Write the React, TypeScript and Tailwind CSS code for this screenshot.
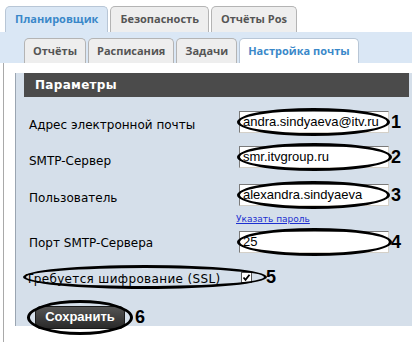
const tabFont = "font-['Open_Sans',sans-serif]";

function TopTab({ label, active }: { label: string; active?: boolean }) {
  return (
    <div
      className={
        "h-[26px] px-[9px] flex items-center rounded-t-[5px] border border-b-0 text-[11px] font-bold " +
        (active
          ? "bg-[#dae7f5] border-[#b8c6d6] text-[#3a88c9]"
          : "bg-[#eeeeee] border-[#b4b4b4] text-[#555555]")
      }
    >
      {label}
    </div>
  );
}

function SubTab({ label, active }: { label: string; active?: boolean }) {
  return (
    <div
      className={
        "h-[25px] px-[8px] flex items-center rounded-t-[5px] border border-b-0 text-[11px] font-bold " +
        (active
          ? "bg-white border-[#b8c6d6] text-[#3a88c9]"
          : "bg-[#eeeeee] border-[#b4b4b4] text-[#555555]")
      }
    >
      {label}
    </div>
  );
}

function Field({ value, wide }: { value: string; wide?: boolean }) {
  return (
    <div className="relative w-[150px] h-[22px]">
      <div className="w-full h-full bg-white border border-t-[#7a7a7a] border-l-[#7a7a7a] border-b-[#d4d0c8] border-r-[#d4d0c8] flex items-center pl-[3px] overflow-hidden whitespace-nowrap font-['Liberation_Sans',Arial,sans-serif] text-[13px] text-black">
        {value}
      </div>
      <div
        className={
          "absolute -top-[3px] -bottom-[3px] -left-[2px] rounded-[50%] border-[3px] border-black " +
          (wide ? "-right-[3px]" : "-right-[1px]")
        }
      />
    </div>
  );
}

function Num({ n }: { n: string }) {
  return (
    <span className="ml-[2px] font-['Liberation_Sans',Arial,sans-serif] font-bold text-[18px] leading-none text-black">
      {n}
    </span>
  );
}

export default function App() {
  return (
    <div className="w-[412px] h-[342px] bg-white overflow-hidden font-['DejaVu_Sans',sans-serif]">
      {/* top tabs */}
      <div className={"flex items-end gap-[2px] pl-[5px] pt-[6px] " + tabFont}>
        <TopTab label="Планировщик" active />
        <TopTab label="Безопасность" />
        <TopTab label="Отчёты Pos" />
      </div>
      <div className={"h-[31px] bg-[#dae7f5] flex items-end gap-[2px] pl-[24px] " + tabFont}>
        <SubTab label="Отчёты" />
        <SubTab label="Расписания" />
        <SubTab label="Задачи" />
        <SubTab label="Настройка почты" active />
      </div>

      {/* content */}
      <div className="ml-[3px] border-l border-[#a9a9a9] pl-[11px] pt-[20px] h-[279px]">
        <div className="border-l border-[#9aa5b1] bg-[#d5dfea] h-[253px] pr-[3px]">
          <div className="-mt-[10px] ml-[8px] h-[24px] bg-[#4b4b4b] flex items-center pl-[11px] text-white font-bold text-[12px] tracking-[0.3px]">
            Параметры
          </div>

          <div className="pl-[13px] pt-[13px] text-[12px] text-black">
            <div className="flex items-center h-[24px]">
              <span className="w-[210px] pt-[6px]">Адрес электронной почты</span>
              <Field value="andra.sindyaeva@itv.ru" />
              <Num n="1" />
            </div>
            <div className="flex items-center h-[24px] mt-[11px]">
              <span className="w-[210px] pt-[8px]">SMTP-Сервер</span>
              <Field value="smr.itvgroup.ru" wide />
              <Num n="2" />
            </div>
            <div className="flex items-center h-[24px] mt-[14px]">
              <span className="w-[210px] pt-[6px]">Пользователь</span>
              <Field value="alexandra.sindyaeva" />
              <Num n="3" />
            </div>
            <div className="h-[12px] mt-[2px] pl-[207px]">
              <span className="text-[9px] leading-[12px] text-[#1c2fd0] underline">Указать пароль</span>
            </div>
            <div className="flex items-center h-[24px] mt-[9px]">
              <span className="w-[210px] pt-[2px]">Порт SMTP-Сервера</span>
              <Field value="25" wide />
              <Num n="4" />
            </div>
            <div className="flex items-center h-[22px] mt-[12px]">
              <div className="relative flex items-center w-[241px] h-[22px] -ml-[6px] pl-[3px]">
                <span className="w-[213px] pt-[4px] tracking-[0.35px]">Требуется шифрование (SSL)</span>
                <span className="ml-[2px] w-[11px] h-[11px] border border-[#555] bg-white flex items-center justify-center">
                  <svg width="9" height="9" viewBox="0 0 9 9">
                    <path d="M1.5 4.5 L3.5 6.8 L7.5 1.8" fill="none" stroke="#000" strokeWidth="1.8" />
                  </svg>
                </span>
                <div className="absolute -top-[1px] -bottom-[1px] left-0 right-[-3px] rounded-[50%] border-[3px] border-black" />
              </div>
              <Num n="5" />
            </div>
            <div className="flex items-center h-[34px] mt-[12px]">
              <div className="relative flex items-center justify-center w-[106px] h-[35px] -ml-[2px]">
                <div className="w-[90px] h-[23px] rounded-[6px] bg-gradient-to-b from-[#555] to-[#2a2a2a] border border-[#1a1a1a] flex items-center justify-center text-white font-bold text-[13px] font-['Liberation_Sans',Arial,sans-serif]">
                  Сохранить
                </div>
                <div className="absolute inset-0 rounded-[50%] border-[3px] border-black" />
              </div>
              <Num n="6" />
            </div>
          </div>
        </div>
      </div>
    </div>
  );
}
